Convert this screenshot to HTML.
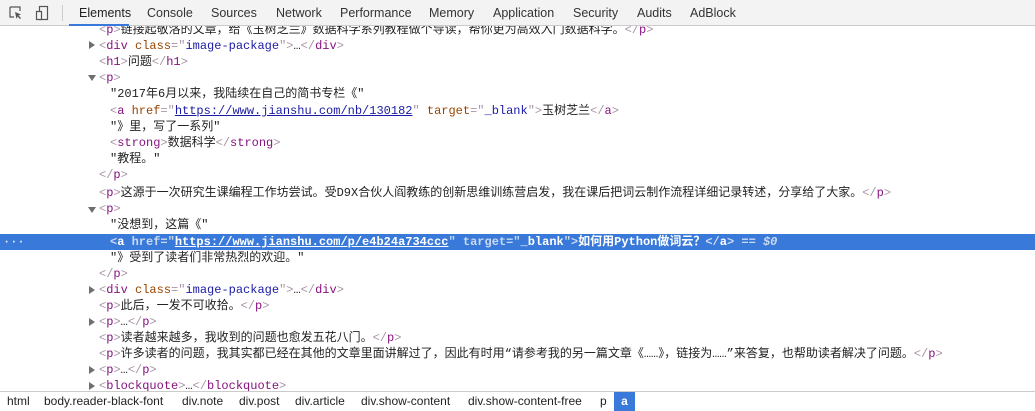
<!DOCTYPE html>
<html><head><meta charset="utf-8"><style>
*{margin:0;padding:0;box-sizing:border-box}
body{width:1035px;height:410px;overflow:hidden;background:#fff;position:relative;font-family:"Liberation Mono","Noto Sans CJK SC",monospace;font-size:12px;color:#222}
.tb{position:absolute;left:0;top:0;width:1035px;height:26px;background:#f3f3f3;border-bottom:1px solid #cbcbcb;font-family:"Liberation Sans",sans-serif;font-size:12.5px;color:#333;z-index:2}
.tb span{position:absolute;top:6px}
.ul{position:absolute;left:69px;top:24px;width:60px;height:2px;background:#3879d9}
.ln{position:absolute;left:0;width:1035px;height:16px;line-height:16px;white-space:pre}
.t{color:#881280}.b{color:#a894a6}.an{color:#994500}.av{color:#1a1aa6}.u{text-decoration:underline}
.rt{position:absolute;left:89px;width:0;height:0;border-top:4px solid transparent;border-bottom:4px solid transparent;border-left:6px solid #6e6e6e}
.dn{position:absolute;left:88px;width:0;height:0;border-left:4px solid transparent;border-right:4px solid transparent;border-top:6px solid #6e6e6e}
.sel{background:#3879d9;color:#fff;font-weight:bold}
.sel .t,.sel .an,.sel .av{color:#fff}.sel .b{color:#cbd9f0}
.bc{position:absolute;left:0;top:391px;width:1035px;height:19px;border-top:1px solid #cbcbcb;background:#fff;font-family:"Liberation Sans",sans-serif;font-size:12px;color:#222}
.bc span{position:absolute;top:2px}
</style></head><body>
<div class="tb">
<svg style="position:absolute;left:9px;top:6px" width="14" height="14" viewBox="0 0 14 14"><path d="M1 1h10v4M1 1v10h4" fill="none" stroke="#555" stroke-width="1.2"/><path d="M6 6l6 2.5-2.5 1 2.5 2.5-1 1-2.5-2.5-1 2.5z" fill="#555"/></svg>
<svg style="position:absolute;left:35px;top:5px" width="14" height="16" viewBox="0 0 14 16"><rect x="4.5" y="1.5" width="8" height="13" fill="none" stroke="#555" stroke-width="1.2"/><rect x="1.5" y="6.5" width="5" height="8" fill="#f3f3f3" stroke="#555" stroke-width="1.2"/></svg>
<div style="position:absolute;left:62px;top:5px;width:1px;height:16px;background:#ccc"></div>
<span style="left:79px;color:#222">Elements</span><span style="left:147px">Console</span><span style="left:211px">Sources</span><span style="left:276px">Network</span><span style="left:340px">Performance</span><span style="left:429px">Memory</span><span style="left:493px">Application</span><span style="left:573px">Security</span><span style="left:637px">Audits</span><span style="left:690px">AdBlock</span>
<div class="ul"></div>
</div>

<div class="ln" style="top:22px;padding-left:99px"><span class="b">&lt;</span><span class="t">p</span><span class="b">&gt;</span>链接起敬洛的文章，给《玉树芝兰》数据科学系列教程做个导读，帮你更为高效入门数据科学。<span class="b">&lt;/</span><span class="t">p</span><span class="b">&gt;</span></div>
<div class="ln" style="top:38px;padding-left:99px"><span class="b">&lt;</span><span class="t">div</span> <span class="an">class</span><span class="b">="</span><span class="av">image-package</span><span class="b">"&gt;</span>…<span class="b">&lt;/</span><span class="t">div</span><span class="b">&gt;</span></div>
<div class="ln" style="top:54px;padding-left:99px"><span class="b">&lt;</span><span class="t">h1</span><span class="b">&gt;</span>问题<span class="b">&lt;/</span><span class="t">h1</span><span class="b">&gt;</span></div>
<div class="ln" style="top:70px;padding-left:99px"><span class="b">&lt;</span><span class="t">p</span><span class="b">&gt;</span></div>
<div class="ln" style="top:86px;padding-left:110px">"2017年6月以来，我陆续在自己的简书专栏《"</div>
<div class="ln" style="top:103px;padding-left:110px"><span class="b">&lt;</span><span class="t">a</span> <span class="an">href</span><span class="b">="</span><span class="av u">https://www.jianshu.com/nb/130182</span><span class="b">"</span> <span class="an">target</span><span class="b">="</span><span class="av">_blank</span><span class="b">"&gt;</span>玉树芝兰<span class="b">&lt;/</span><span class="t">a</span><span class="b">&gt;</span></div>
<div class="ln" style="top:119px;padding-left:110px">"》里，写了一系列"</div>
<div class="ln" style="top:135px;padding-left:110px"><span class="b">&lt;</span><span class="t">strong</span><span class="b">&gt;</span>数据科学<span class="b">&lt;/</span><span class="t">strong</span><span class="b">&gt;</span></div>
<div class="ln" style="top:151px;padding-left:110px">"教程。"</div>
<div class="ln" style="top:167px;padding-left:99px"><span class="b">&lt;/</span><span class="t">p</span><span class="b">&gt;</span></div>
<div class="ln" style="top:185px;padding-left:99px"><span class="b">&lt;</span><span class="t">p</span><span class="b">&gt;</span>这源于一次研究生课编程工作坊尝试。受D9X合伙人阎教练的创新思维训练营启发，我在课后把词云制作流程详细记录转述，分享给了大家。<span class="b">&lt;/</span><span class="t">p</span><span class="b">&gt;</span></div>
<div class="ln" style="top:201px;padding-left:99px"><span class="b">&lt;</span><span class="t">p</span><span class="b">&gt;</span></div>
<div class="ln" style="top:217px;padding-left:110px">"没想到，这篇《"</div>
<div class="ln sel" style="top:234px;padding-left:110px"><span style="position:absolute;left:3px;font-weight:normal">···</span><span class="b">&lt;</span><span class="t">a</span> <span class="an" style="color:#cbd9f0">href</span><span class="b">="</span><span class="av u">https://www.jianshu.com/p/e4b24a734ccc</span><span class="b">"</span> <span class="an" style="color:#cbd9f0">target</span><span class="b">="</span><span class="av">_blank</span><span class="b">"&gt;</span>如何用Python做词云？<span class="b">&lt;/</span><span class="t">a</span><span class="b">&gt;</span> <span style="color:#cbd9f0;font-style:italic">== $0</span></div>
<div class="ln" style="top:250px;padding-left:110px">"》受到了读者们非常热烈的欢迎。"</div>
<div class="ln" style="top:266px;padding-left:99px"><span class="b">&lt;/</span><span class="t">p</span><span class="b">&gt;</span></div>
<div class="ln" style="top:282px;padding-left:99px"><span class="b">&lt;</span><span class="t">div</span> <span class="an">class</span><span class="b">="</span><span class="av">image-package</span><span class="b">"&gt;</span>…<span class="b">&lt;/</span><span class="t">div</span><span class="b">&gt;</span></div>
<div class="ln" style="top:298px;padding-left:99px"><span class="b">&lt;</span><span class="t">p</span><span class="b">&gt;</span>此后，一发不可收拾。<span class="b">&lt;/</span><span class="t">p</span><span class="b">&gt;</span></div>
<div class="ln" style="top:314px;padding-left:99px"><span class="b">&lt;</span><span class="t">p</span><span class="b">&gt;</span>…<span class="b">&lt;/</span><span class="t">p</span><span class="b">&gt;</span></div>
<div class="ln" style="top:330px;padding-left:99px"><span class="b">&lt;</span><span class="t">p</span><span class="b">&gt;</span>读者越来越多，我收到的问题也愈发五花八门。<span class="b">&lt;/</span><span class="t">p</span><span class="b">&gt;</span></div>
<div class="ln" style="top:346px;padding-left:99px"><span class="b">&lt;</span><span class="t">p</span><span class="b">&gt;</span>许多读者的问题，我其实都已经在其他的文章里面讲解过了，因此有时用“请参考我的另一篇文章《……》，链接为……”来答复，也帮助读者解决了问题。<span class="b">&lt;/</span><span class="t">p</span><span class="b">&gt;</span></div>
<div class="ln" style="top:362px;padding-left:99px"><span class="b">&lt;</span><span class="t">p</span><span class="b">&gt;</span>…<span class="b">&lt;/</span><span class="t">p</span><span class="b">&gt;</span></div>
<div class="ln" style="top:378px;padding-left:99px"><span class="b">&lt;</span><span class="t">blockquote</span><span class="b">&gt;</span>…<span class="b">&lt;/</span><span class="t">blockquote</span><span class="b">&gt;</span></div>

<div class="rt" style="top:41px"></div>
<div class="dn" style="top:75px"></div>
<div class="dn" style="top:207px"></div>
<div class="rt" style="top:286px"></div>
<div class="rt" style="top:318px"></div>
<div class="rt" style="top:366px"></div>
<div class="rt" style="top:382px"></div>

<div class="bc">
<span style="left:7px">html</span><span style="left:44px">body.reader-black-font</span><span style="left:182px">div.note</span><span style="left:239px">div.post</span><span style="left:295px">div.article</span><span style="left:361px">div.show-content</span><span style="left:468px">div.show-content-free</span><span style="left:600px">p</span>
<div style="position:absolute;left:614px;top:0;width:21px;height:19px;background:#3879d9;color:#fff;text-align:center;line-height:18px;font-weight:bold">a</div>
</div>
</body></html>
